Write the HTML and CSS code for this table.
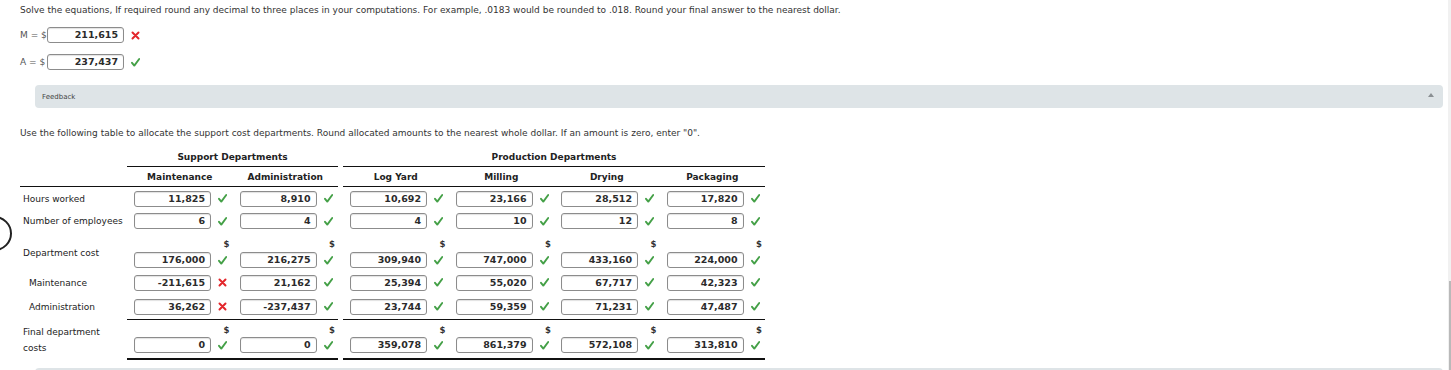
FILE: index.html
```html
<!DOCTYPE html>
<html lang="en">
<head>
  <meta charset="UTF-8">
  <title>Support cost allocation</title>
  <link rel="stylesheet" href="styles.css">
</head>
<body>
  <div class="page">
    <p class="prompt">Solve the equations, If required round any decimal to three places in your computations. For example, .0183 would be rounded to .018. Round your final answer to the nearest dollar.</p>

    <div class="eq-row">
      <span class="eq-label">M = $</span>
      <span class="field">211,615</span>
      <i class="mark bad"></i>
    </div>
    <div class="eq-row second">
      <span class="eq-label">A = $</span>
      <span class="field">237,437</span>
      <i class="mark ok"></i>
    </div>

    <div class="feedback">
      <span>Feedback</span>
      <span class="caret"></span>
    </div>

    <p class="prompt table-intro">Use the following table to allocate the support cost departments. Round allocated amounts to the nearest whole dollar. If an amount is zero, enter "0".</p>

    <table class="alloc">
      <colgroup>
        <col class="c-label">
        <col class="c-val"><col class="c-val">
        <col class="c-gap">
        <col class="c-val"><col class="c-val"><col class="c-val"><col class="c-val">
      </colgroup>
      <tr class="group-head">
        <td></td>
        <th colspan="2" class="ruled">Support Departments</th>
        <td></td>
        <th colspan="4" class="ruled">Production Departments</th>
      </tr>
      <tr class="col-head">
        <td class="ruled"></td>
        <th class="ruled">Maintenance</th>
        <th class="ruled">Administration</th>
        <td></td>
        <th class="ruled">Log Yard</th>
        <th class="ruled">Milling</th>
        <th class="ruled">Drying</th>
        <th class="ruled">Packaging</th>
      </tr>
      <tr class="row-a">
        <td class="label">Hours worked</td>
        <td><div class="val"><span class="field">11,825</span><i class="mark ok"></i></div></td>
        <td><div class="val"><span class="field">8,910</span><i class="mark ok"></i></div></td>
        <td></td>
        <td><div class="val"><span class="field">10,692</span><i class="mark ok"></i></div></td>
        <td><div class="val"><span class="field">23,166</span><i class="mark ok"></i></div></td>
        <td><div class="val"><span class="field">28,512</span><i class="mark ok"></i></div></td>
        <td><div class="val"><span class="field">17,820</span><i class="mark ok"></i></div></td>
      </tr>
      <tr class="row-b">
        <td class="label">Number of employees</td>
        <td><div class="val"><span class="field">6</span><i class="mark ok"></i></div></td>
        <td><div class="val"><span class="field">4</span><i class="mark ok"></i></div></td>
        <td></td>
        <td><div class="val"><span class="field">4</span><i class="mark ok"></i></div></td>
        <td><div class="val"><span class="field">10</span><i class="mark ok"></i></div></td>
        <td><div class="val"><span class="field">12</span><i class="mark ok"></i></div></td>
        <td><div class="val"><span class="field">8</span><i class="mark ok"></i></div></td>
      </tr>
      <tr class="row-cost">
        <td class="label top">Department cost</td>
        <td><div class="money"><span class="cur">$</span><div class="val"><span class="field">176,000</span><i class="mark ok"></i></div></div></td>
        <td><div class="money"><span class="cur">$</span><div class="val"><span class="field">216,275</span><i class="mark ok"></i></div></div></td>
        <td></td>
        <td><div class="money"><span class="cur">$</span><div class="val"><span class="field">309,940</span><i class="mark ok"></i></div></div></td>
        <td><div class="money"><span class="cur">$</span><div class="val"><span class="field">747,000</span><i class="mark ok"></i></div></div></td>
        <td><div class="money"><span class="cur">$</span><div class="val"><span class="field">433,160</span><i class="mark ok"></i></div></div></td>
        <td><div class="money"><span class="cur">$</span><div class="val"><span class="field">224,000</span><i class="mark ok"></i></div></div></td>
      </tr>
      <tr class="row-m">
        <td class="label sub">Maintenance</td>
        <td><div class="val"><span class="field">-211,615</span><i class="mark bad"></i></div></td>
        <td><div class="val"><span class="field">21,162</span><i class="mark ok"></i></div></td>
        <td></td>
        <td><div class="val"><span class="field">25,394</span><i class="mark ok"></i></div></td>
        <td><div class="val"><span class="field">55,020</span><i class="mark ok"></i></div></td>
        <td><div class="val"><span class="field">67,717</span><i class="mark ok"></i></div></td>
        <td><div class="val"><span class="field">42,323</span><i class="mark ok"></i></div></td>
      </tr>
      <tr class="row-adm">
        <td class="label sub">Administration</td>
        <td class="ruled"><div class="val"><span class="field">36,262</span><i class="mark bad"></i></div></td>
        <td class="ruled"><div class="val"><span class="field">-237,437</span><i class="mark ok"></i></div></td>
        <td></td>
        <td class="ruled"><div class="val"><span class="field">23,744</span><i class="mark ok"></i></div></td>
        <td class="ruled"><div class="val"><span class="field">59,359</span><i class="mark ok"></i></div></td>
        <td class="ruled"><div class="val"><span class="field">71,231</span><i class="mark ok"></i></div></td>
        <td class="ruled"><div class="val"><span class="field">47,487</span><i class="mark ok"></i></div></td>
      </tr>
      <tr class="row-final">
        <td class="label top">Final department<br>costs</td>
        <td class="total"><div class="money"><span class="cur">$</span><div class="val"><span class="field">0</span><i class="mark ok"></i></div></div></td>
        <td class="total"><div class="money"><span class="cur">$</span><div class="val"><span class="field">0</span><i class="mark ok"></i></div></div></td>
        <td></td>
        <td class="total"><div class="money"><span class="cur">$</span><div class="val"><span class="field">359,078</span><i class="mark ok"></i></div></div></td>
        <td class="total"><div class="money"><span class="cur">$</span><div class="val"><span class="field">861,379</span><i class="mark ok"></i></div></div></td>
        <td class="total"><div class="money"><span class="cur">$</span><div class="val"><span class="field">572,108</span><i class="mark ok"></i></div></div></td>
        <td class="total"><div class="money"><span class="cur">$</span><div class="val"><span class="field">313,810</span><i class="mark ok"></i></div></div></td>
      </tr>
    </table>

    <div class="feedback next"></div>
  </div>

  <!-- pointer ring at the left edge -->
  <div class="ring"></div>

  <!-- window scrollbar -->
  <div class="scrollbar"><div class="thumb"></div></div>
</body>
</html>
```

FILE: styles.css
```css
* {
  margin: 0;
  padding: 0;
  box-sizing: border-box;
}

body {
  font-family: "DejaVu Sans", Verdana, sans-serif;
  font-size: 9px;
  color: #333;
  background: #fff;
  width: 1451px;
  height: 370px;
  overflow: hidden;
  position: relative;
}

.page {
  padding: 3px 0 0 20px;
}

.prompt {
  line-height: 14px;
  white-space: nowrap;
}

/* equation answers */
.eq-row {
  display: flex;
  align-items: center;
  height: 16px;
  margin-top: 10px;
}

.eq-row.second {
  margin-top: 11px;
}

.eq-label {
  width: 27px;
  color: #555;
}

.field {
  display: inline-block;
  width: 77px;
  height: 16px;
  line-height: 14px;
  border: 1px solid #8c8c8c;
  border-radius: 3px;
  box-shadow: inset 0 1px 1px rgba(0, 0, 0, 0.12);
  padding-right: 5px;
  text-align: right;
  font-weight: bold;
  font-size: 9.5px;
  color: #2b2b2b;
  background: #fff;
}

.eq-row .mark {
  margin-left: 7px;
}

/* correct / incorrect marks */
.mark {
  display: inline-block;
  width: 9px;
  height: 9px;
  flex: none;
  background-repeat: no-repeat;
  background-size: 9px 9px;
}

.mark.ok {
  background-image: url("data:image/svg+xml,%3Csvg xmlns='http://www.w3.org/2000/svg' viewBox='0 0 9 9'%3E%3Cpath d='M1 4.8 L3.3 7.6 L8.2 1' fill='none' stroke='%2344a047' stroke-width='1.9' stroke-linecap='round' stroke-linejoin='round'/%3E%3C/svg%3E");
}

.mark.bad {
  background-image: url("data:image/svg+xml,%3Csvg xmlns='http://www.w3.org/2000/svg' viewBox='0 0 9 9'%3E%3Cpath d='M1.5 1.5 L7.5 7.5 M7.5 1.5 L1.5 7.5' fill='none' stroke='%23e3262b' stroke-width='2' stroke-linecap='round'/%3E%3C/svg%3E");
}

/* collapsed feedback panel */
.feedback {
  display: flex;
  align-items: center;
  justify-content: space-between;
  height: 23px;
  margin: 15px 8px 0 15px;
  padding: 0 9px 0 7px;
  background: #dee4e7;
  border-radius: 4px;
  font-size: 7px;
  color: #444;
}

.caret {
  width: 0;
  height: 0;
  border-left: 3px solid transparent;
  border-right: 3px solid transparent;
  border-bottom: 4px solid #8a8f93;
  margin-top: -3px;
}

.feedback.next {
  margin-top: 8px;
  height: 10px;
}

.table-intro {
  margin-top: 18px;
}

/* allocation table */
.alloc {
  margin-top: 8px;
  border-collapse: separate;
  border-spacing: 0;
  table-layout: fixed;
  width: 745px;
}

.c-label { width: 107px; }
.c-val { width: 105.5px; }
.c-gap { width: 5px; }

.alloc td,
.alloc th {
  padding: 0;
  vertical-align: middle;
}

.alloc th {
  font-weight: bold;
  color: #222;
  text-align: center;
}

.alloc .ruled {
  border-bottom: 1px solid #111;
}

.alloc .total {
  border-bottom: 2px solid #111;
}

/* cell heights include the rule below */
.group-head th,
.group-head td { height: 19px; }
.col-head th,
.col-head td { height: 20px; }

.row-a td { height: 23px; }
.row-b td { height: 22px; }
.row-m td { height: 23px; }
.row-adm td { height: 26px; }

.label {
  padding-left: 3px !important;
  color: #222;
  white-space: nowrap;
}

.label.sub {
  padding-left: 9px !important;
}

.label.top {
  vertical-align: top !important;
  line-height: 16px;
}

.row-cost .label { padding-top: 13px !important; }
.row-final .label { padding-top: 4px !important; }

.val {
  display: flex;
  align-items: center;
  gap: 7px;
  padding-left: 7px;
}

.money {
  display: flex;
  flex-direction: column;
  justify-content: flex-end;
}

.row-cost .money {
  height: 39px;
  padding-bottom: 3px;
}

.row-final .money {
  height: 38px;
  padding-bottom: 5px;
}

.cur {
  display: block;
  height: 10px;
  line-height: 10px;
  margin-bottom: 3px;
  padding-right: 3px;
  text-align: right;
  font-weight: bold;
  font-size: 8.5px;
  color: #333;
}

.row-final .cur {
  margin-bottom: 2px;
}

/* overlays */
.ring {
  position: absolute;
  left: -23px;
  top: 216px;
  width: 35px;
  height: 35px;
  border: 2px solid #222;
  border-radius: 50%;
  background: #fff;
}

.scrollbar {
  position: absolute;
  right: 0;
  top: 0;
  width: 3px;
  height: 370px;
  background: #f1f1f1;
}

.scrollbar .thumb {
  margin-top: 281px;
  margin-left: 1px;
  width: 2px;
  height: 89px;
  background: #b9b9b9;
}
```
